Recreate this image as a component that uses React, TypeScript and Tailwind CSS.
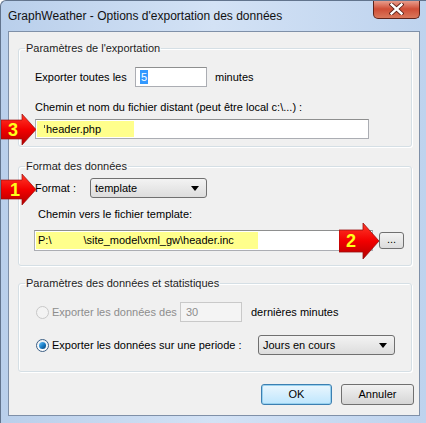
import React from "react";

function Arrow({ className, num, numClass }: { className: string; num: string; numClass: string }) {
  return (
    <div className={"absolute " + className}>
      <svg className="absolute inset-0 w-full h-full" viewBox="0 0 40 36" preserveAspectRatio="none">
        <defs>
          <linearGradient id="ar" x1="0" y1="0" x2="0" y2="1">
            <stop offset="0" stopColor="#ff3b2a" />
            <stop offset="0.5" stopColor="#f20000" />
            <stop offset="1" stopColor="#b30000" />
          </linearGradient>
        </defs>
        <polygon points="0,7 24,7 24,0 40,18 24,36 24,29 0,29" fill="url(#ar)" stroke="#9b0d0d" strokeWidth="0.8" />
      </svg>
      <span className={"absolute font-bold text-[18px] leading-none text-[#ffff1a] font-['Liberation_Sans',Arial,sans-serif] " + numClass}>
        {num}
      </span>
    </div>
  );
}

function Select({ value, className }: { value: string; className: string }) {
  return (
    <div
      className={
        "flex items-center justify-between h-[20px] rounded-[3px] border border-[#707070] bg-linear-to-b from-[#f3f3f3] to-[#dddddd] pl-[4px] pr-[7px] " +
        className
      }
    >
      <span>{value}</span>
      <svg width="8" height="5" viewBox="0 0 8 5">
        <polygon points="0,0 8,0 4,5" fill="#000" />
      </svg>
    </div>
  );
}

function Radio({ checked, disabled }: { checked?: boolean; disabled?: boolean }) {
  return (
    <div
      className={
        "w-[13px] h-[13px] rounded-full border flex items-center justify-center " +
        (disabled ? "border-[#c8c8c8] bg-[#f3f3f3]" : "border-[#3c5f84] bg-linear-to-b from-[#e9eef3] to-[#ffffff]")
      }
    >
      {checked && <div className="w-[7px] h-[7px] rounded-full bg-linear-to-br from-[#68c4f8] via-[#1b82cc] to-[#0b3f72]" />}
    </div>
  );
}

export default function App() {
  return (
    <div className="relative w-[426px] h-[423px] overflow-hidden flex flex-col pl-[7px] pr-[6px] pb-[7px] border-l border-t border-[#62748d] rounded-tl-[6px] bg-linear-to-r from-[#b9cfeb] via-[#d3e2f5] to-[#bed3ee] font-['Liberation_Sans',Arial,sans-serif] text-[11px] text-black">
      {/* Barre de titre */}
      <div className="h-[30px] shrink-0 flex items-start justify-between">
        <span className="mt-[8px] text-[12px] leading-[15px] text-[#111]">
          GraphWeather - Options d'exportation des données
        </span>
        <div className="w-[47px] h-[19px] -mt-px rounded-b-[5px] border border-t-0 border-[#5e241b] bg-linear-to-b from-[#e9a596] via-[#cf4d36] to-[#d9775b] flex items-center justify-center">
          <svg width="15" height="12" viewBox="0 0 15 12">
            <path d="M2.5 1.5 L12.5 10.5 M12.5 1.5 L2.5 10.5" stroke="#5a1f17" strokeWidth="4.2" strokeLinecap="square" />
            <path d="M2.5 1.5 L12.5 10.5 M12.5 1.5 L2.5 10.5" stroke="#ffffff" strokeWidth="2.4" strokeLinecap="square" />
          </svg>
        </div>
      </div>

      {/* Zone client */}
      <div className="flex-1 border border-[#7f90a8] bg-[#f0f0f0] flex flex-col pt-[9px] pl-[9px] pr-[7px]">
        {/* Paramètres de l'exportation */}
        <fieldset className="border border-[#d5dfe5] rounded-[3px] shadow-[inset_1px_1px_0_#fff,1px_1px_0_#fff]">
          <legend className="ml-[6px] px-[1px] leading-[14px] text-[#1e1e1e]">Paramètres de l'exportation</legend>
          <div className="pt-[12px] pl-[16px] pb-[7px] flex flex-col">
            <div className="flex items-center h-[20px]">
              <span className="w-[100px]">Exporter toutes les</span>
              <div className="w-[72px] h-[20px] border border-[#abadb3] border-t-[#8e8f8f] bg-white flex items-center pl-[4px]">
                <span className="bg-[#3399ff] text-white leading-[14px] px-[1px]">5</span>
              </div>
              <span className="ml-[8px]">minutes</span>
            </div>
            <span className="mt-[13px] leading-[14px]">Chemin et nom du fichier distant (peut être local c:\...) :</span>
            <div className="mt-[5px] w-[334px] h-[20px] border border-[#abadb3] border-t-[#8e8f8f] bg-white p-px flex">
              <div className="w-[97px] bg-[#ffff8c] flex items-center pl-[7px]">
                <span className="w-px h-[3px] bg-[#555] -mt-[6px] mr-[1px]" />
                header.php
              </div>
            </div>
          </div>
        </fieldset>

        {/* Format des données */}
        <fieldset className="mt-[12px] border border-[#d5dfe5] rounded-[3px] shadow-[inset_1px_1px_0_#fff,1px_1px_0_#fff]">
          <legend className="ml-[6px] px-[1px] leading-[14px] text-[#1e1e1e]">Format des données</legend>
          <div className="pt-[5px] pl-[16px] pb-[14px] flex flex-col">
            <div className="flex items-center h-[20px]">
              <span className="w-[55px]">Format :</span>
              <Select value="template" className="w-[117px]" />
            </div>
            <span className="mt-[9px] ml-[3px] leading-[14px]">Chemin vers le fichier template:</span>
            <div className="mt-[9px] -ml-px flex items-center">
              <div className="w-[339px] h-[21px] border border-[#abadb3] border-t-[#8e8f8f] bg-white p-px flex">
                <div className="w-[222px] bg-[#ffff8c] flex items-center pl-[2px]">
                  <span>P:\</span>
                  <span className="w-[32px]" />
                  <span>\site_model\xml_gw\header.inc</span>
                </div>
              </div>
              <div className="ml-[6px] w-[25px] h-[17px] rounded-[3px] border border-[#707070] bg-linear-to-b from-[#f3f3f3] to-[#dcdcdc] flex items-center justify-center leading-none pb-[3px]">
                ...
              </div>
            </div>
          </div>
        </fieldset>

        {/* Paramètres des données et statistiques */}
        <fieldset className="mt-[10px] border border-[#d5dfe5] rounded-[3px] shadow-[inset_1px_1px_0_#fff,1px_1px_0_#fff]">
          <legend className="ml-[6px] px-[1px] leading-[14px] text-[#1e1e1e]">Paramètres des données et statistiques</legend>
          <div className="pt-[12px] pl-[17px] pb-[16px] flex flex-col">
            <div className="flex items-center h-[20px]">
              <Radio disabled />
              <span className="ml-[3px] w-[128px] text-[#8d8d8d]">Exporter les données des</span>
              <div className="w-[62px] h-[20px] border border-[#c9c9c9] bg-[#f4f4f4] flex items-center pl-[5px] text-[#8d8d8d]">30</div>
              <span className="ml-[9px]">dernières minutes</span>
            </div>
            <div className="mt-[13px] flex items-center h-[20px]">
              <Radio checked />
              <span className="ml-[3px] w-[206px]">Exporter les données sur une periode :</span>
              <Select value="Jours en cours" className="w-[137px]" />
            </div>
          </div>
        </fieldset>

        {/* Boutons */}
        <div className="mt-[12px] -mr-[2px] flex justify-end gap-[9px]">
          <div className="w-[71px] h-[21px] rounded-[3px] border border-[#3c7fb1] bg-linear-to-b from-[#eaf6fd] to-[#bee6fd] shadow-[inset_0_0_0_1px_#98d1ef] flex items-center justify-center">
            OK
          </div>
          <div className="w-[73px] h-[21px] rounded-[3px] border border-[#707070] bg-linear-to-b from-[#f2f2f2] to-[#d5d5d5] flex items-center justify-center">
            Annuler
          </div>
        </div>
      </div>

      {/* Flèches d'annotation */}
      <Arrow className="left-0 top-[113px] w-[35px] h-[31px]" num="3" numClass="left-[7px] top-[7px]" />
      <Arrow className="left-0 top-[173px] w-[35px] h-[31px]" num="1" numClass="left-[9px] top-[7px]" />
      <Arrow className="left-[338px] top-[222px] w-[40px] h-[36px]" num="2" numClass="left-[7px] top-[9px]" />
    </div>
  );
}
